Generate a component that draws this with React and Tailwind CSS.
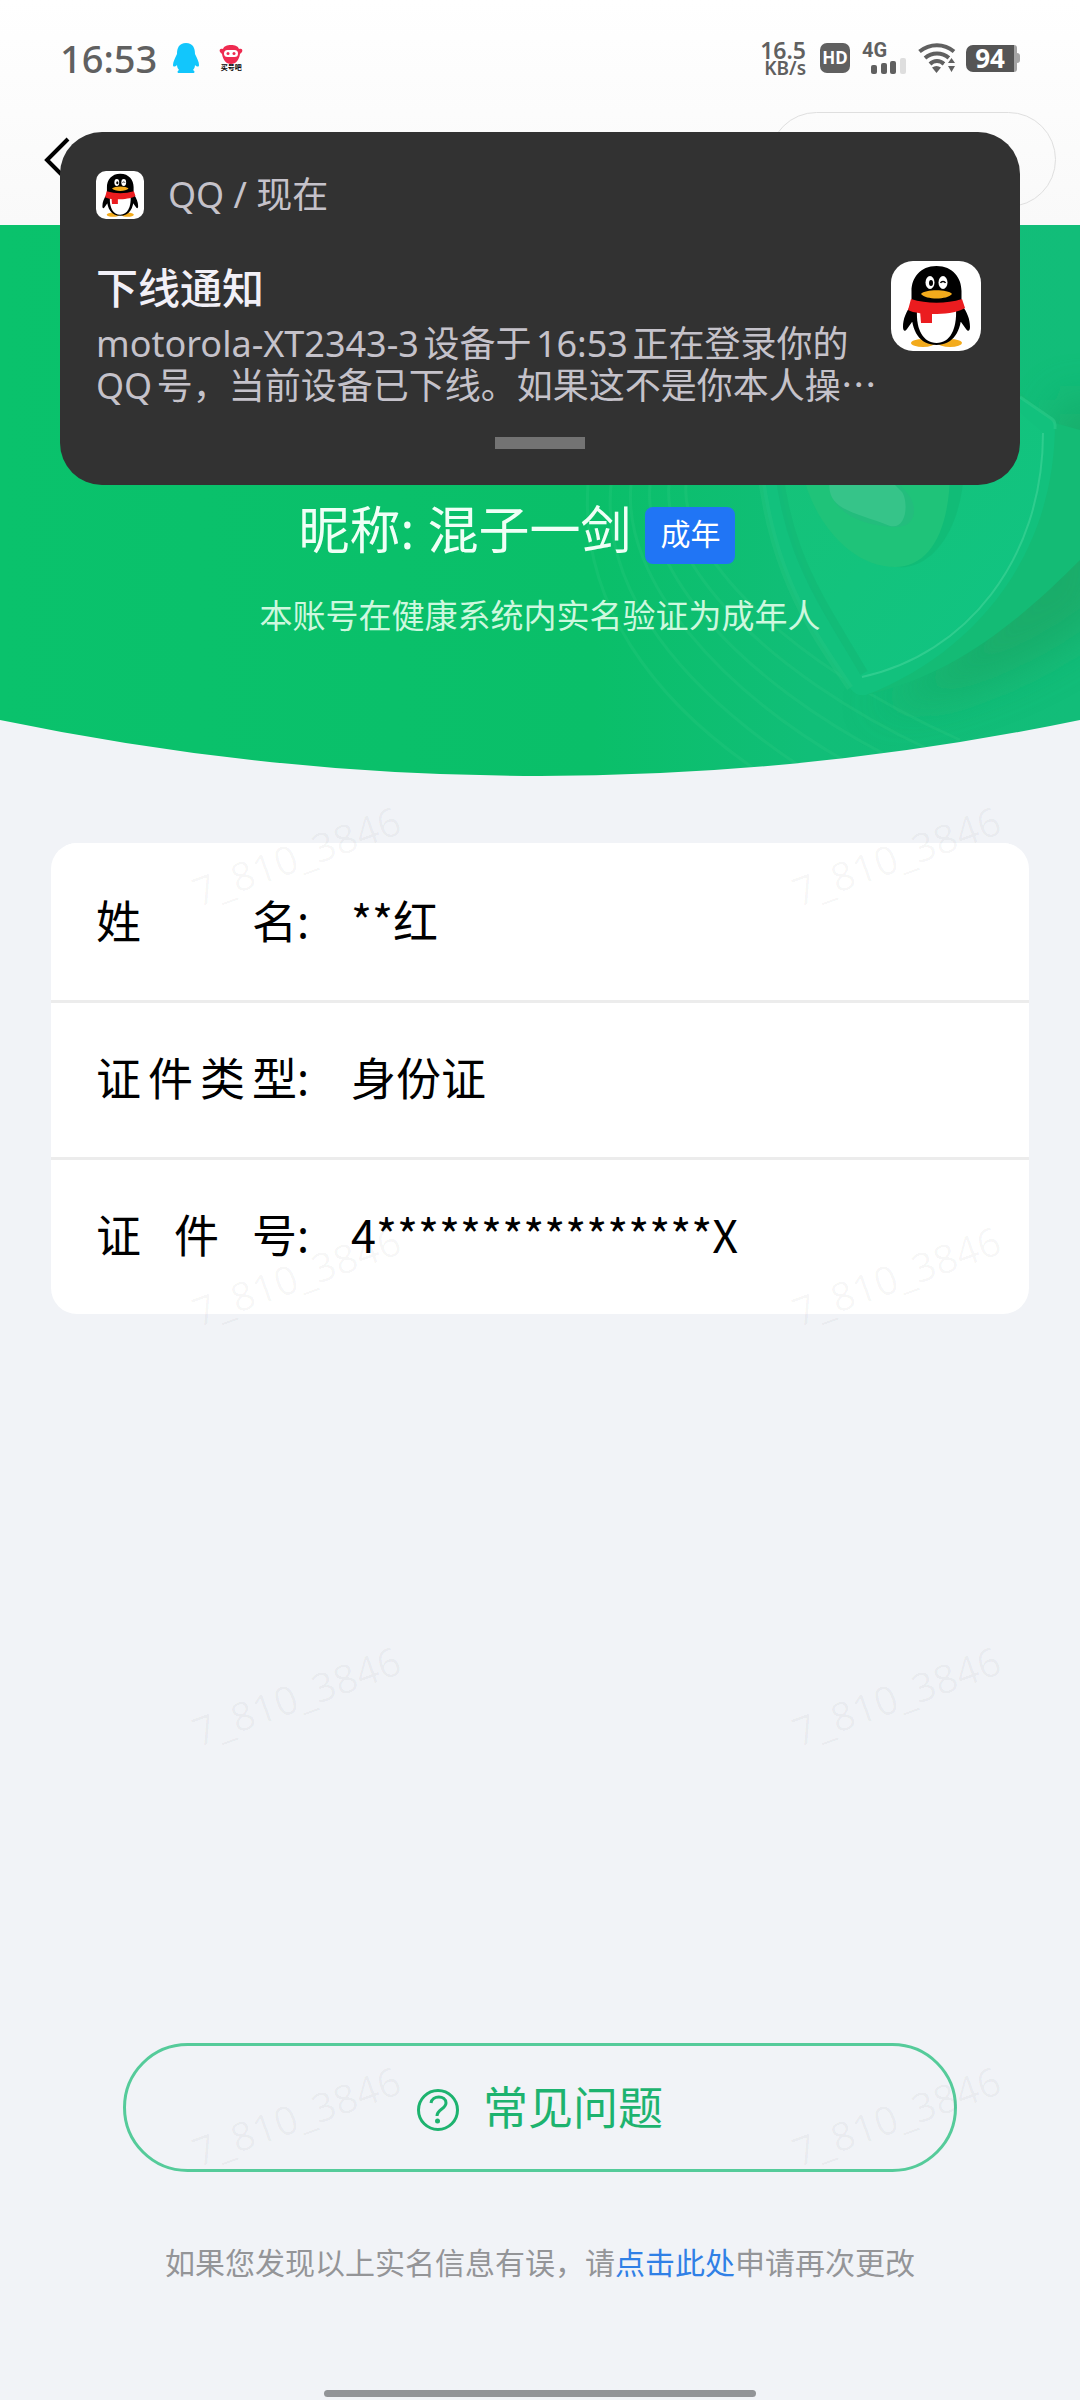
import { useId } from 'react';

const rows = [
  { label: '姓名', value: '**红' },
  { label: '证件类型', value: '身份证' },
  { label: '证件号', value: '4****************X' },
];

const rings = [
  'M588 485C580 600 650 700 765 776',
  'M611 485C601 590 680 690 815 776',
  'M631 485C622 580 720 690 850 764',
  'M650 485C642 570 740 680 890 757',
  'M669 485C662 560 760 670 930 750',
  'M686 485C680 550 780 660 960 740',
];

function Penguin({ className }) {
  return (
    <svg viewBox="0 0 90 90" className={className} aria-hidden="true">
      <rect width="90" height="90" fill="#fff" />
      <ellipse cx="32" cy="82" rx="12" ry="4" fill="#f3ab1c" />
      <ellipse cx="59" cy="82" rx="12" ry="4" fill="#f3ab1c" />
      <path d="M20 44C15 51 12 58 12 66c0 4 2 5 4 2l5-7h49l5 7c2 3 4 2 4-2 0-8-3-15-8-22Z" fill="#000" />
      <path d="M45.500 5C29 5 20.500 17 20.500 30v20C20 70 29 84 45.500 84S71 70 70.500 50V30C70.500 17 62 5 45.500 5Z" fill="#000" />
      <path d="M26 50c-1 18 6 32 19.500 32S66 68 65 48Z" fill="#fff" />
      <path d="M20 38c16 5 35 5 51 0l3 9c-4 3-17 6-28 6-12 0-24-1-29-4Z" fill="#eb1c1f" />
      <path d="M29 49h12v13H30Z" fill="#eb1c1f" />
      <ellipse cx="39" cy="21.500" rx="4.500" ry="6.500" fill="#fff" />
      <ellipse cx="52" cy="21.500" rx="4.500" ry="6.500" fill="#fff" />
      <ellipse cx="40" cy="22" rx="2" ry="3" fill="#000" />
      <path d="M49.500 22c1-2 4-2 5 0" fill="none" stroke="#000" strokeWidth="1.500" />
      <path d="M30 33c4-5 27-5 31 0-5 6-26 6-31 0Z" fill="#f3ab1c" />
    </svg>
  );
}

function StatusBar() {
  return (
    <div className="flex h-[112px] items-center justify-between pl-15 pr-15 pt-1 text-[#606060]">
      <div className="flex items-center">
        <span className="text-[38px] leading-10 font-medium">16:53</span>
        <svg viewBox="0 0 26 30" className="ml-4 h-[30px] w-[26px]" aria-hidden="true">
          <path d="M13 0C6 0 4 5 4 11c-2 4-4 8-4 11 0 2 2 2 4 0 0 2 1 4 2 5-2 1-2 3 0 3h14c2 0 2-2 0-3 1-1 2-3 2-5 2 2 4 2 4 0 0-3-2-7-4-11 0-6-2-11-9-11Z" fill="#12c6fc" />
        </svg>
        <div className="ml-5 flex flex-col items-center">
          <svg viewBox="0 0 24 19" className="h-[19px] w-6" aria-hidden="true">
            <path d="M12 0C8 0 5 1 4 4 1 3 0 5 1 7l2 2c1 6 4 10 9 10s8-4 9-10l2-2c1-2 0-4-3-3-1-3-4-4-8-4Z" fill="#ee2b50" />
            <rect x="5" y="5" width="14" height="7" rx="3.500" fill="#fff" />
            <circle cx="9" cy="8.500" r="1.500" fill="#ee2b50" />
            <circle cx="15" cy="8.500" r="1.500" fill="#ee2b50" />
          </svg>
          <span className="text-[7px] leading-2 font-bold text-black">买号吧</span>
        </div>
      </div>
      <div className="flex items-center">
        <div className="flex flex-col items-end font-semibold">
          <span className="text-[23px] leading-5">16.5</span>
          <span className="text-[19px] leading-4">KB/s</span>
        </div>
        <span className="ml-[14px] flex h-[30px] w-[30px] items-center justify-center rounded-[7px] bg-[#606060] text-[17px] leading-5 font-bold text-white">
          HD
        </span>
        <div className="ml-3 flex w-11 flex-col">
          <span className="font-['Roboto',sans-serif] text-[20px] leading-4 font-bold">4G</span>
          <svg viewBox="0 0 44 16" className="h-4 w-11" aria-hidden="true">
            <rect x="9" y="7" width="6" height="9" rx="2" fill="#606060" />
            <rect x="19" y="5" width="6" height="11" rx="2" fill="#606060" />
            <rect x="28" y="3" width="6" height="13" rx="2" fill="#606060" />
            <rect x="38" y="0" width="6" height="16" rx="2" fill="#dedede" />
          </svg>
        </div>
        <svg viewBox="0 0 38 30" className="ml-3 h-[30px] w-[38px]" aria-hidden="true">
          <g fill="none" stroke="#606060" strokeWidth="4">
            <path d="M1.500 8.500C12 0 26 0 36 8.500" />
            <path d="M7 15C14 9 24 9 31 15" />
            <path d="M12 21c4-4 10-4 14 0" />
          </g>
          <path d="M14 24.500c3-2 6-2 9 0L18.500 30Z" fill="#606060" />
          <path d="M33.500 12 39 21l-5 10-8-6v-4Z" fill="#fcfcfc" />
          <path d="m33.500 15 3.500 5h-7ZM33.500 29l3.500-6h-7Z" fill="#606060" />
        </svg>
        <div className="ml-[10px] flex items-center">
          <span className="flex h-[27px] w-12 items-center justify-center rounded-l-[7px] bg-[#555] text-[26px] leading-6 font-bold text-white">94</span>
          <span className="h-[27px] w-[3px] rounded-r-[6px] bg-[#a5a5a5]" />
          <span className="h-[10px] w-[3px] rounded-r-[3px] bg-[#a5a5a5]" />
        </div>
      </div>
    </div>
  );
}

function HeroArt() {
  const id = useId();
  return (
    <svg viewBox="0 225 1080 551" preserveAspectRatio="none" className="absolute inset-0 h-full w-full" aria-hidden="true">
      <defs>
        <clipPath id={`${id}clip`}>
          <path d="M0 225H1080V720Q810 776 540 776T0 720Z" />
        </clipPath>
        <linearGradient id={`${id}base`} x1="0" y1="0" x2="1" y2="0">
          <stop offset="0" stopColor="#0ac26c" />
          <stop offset="0.55" stopColor="#0abf69" />
          <stop offset="0.75" stopColor="#11be78" />
          <stop offset="1" stopColor="#12bd79" />
        </linearGradient>
        <linearGradient id={`${id}face`} x1="0" y1="0" x2="1" y2="1">
          <stop offset="0" stopColor="#16c277" />
          <stop offset="1" stopColor="#10c483" />
        </linearGradient>
        <filter id={`${id}soft`} x="-30%" y="-30%" width="160%" height="160%">
          <feGaussianBlur stdDeviation="22" />
        </filter>
      </defs>
      <g clipPath={`url(#${id}clip)`}>
        <rect y="225" width="1080" height="551" fill={`url(#${id}base)`} />
        <path d="M870 710C960 700 1050 660 1110 610V400H1060C1050 560 950 670 870 710Z" fill="#1aa866" opacity="0.8" filter={`url(#${id}soft)`} />
        <g fill="none" stroke="#3fd08a" strokeWidth="3" opacity="0.18">
          {rings.map((d) => (
            <path key={d} d={d} />
          ))}
        </g>
        {/* shield edge, face and highlight */}
        <path d="M757 400C755 560 815 635 850 688Q856 697 866 695C960 675 1030 610 1080 560V430L1055 423L960 340Z" fill="#14bb75" />
        <path d="M757 400C755 560 815 635 850 688Q856 697 866 695C970 655 1055 560 1055 423L1020 397L960 340Z" fill="#12c17d" />
        <path d="M757 400C755 560 815 635 850 688" fill="none" stroke="#2bc983" strokeWidth="7" opacity="0.35" />
        <path d="M774 400C775 545 820 600 862 677C960 655 1043 560 1043 433L960 360Z" fill={`url(#${id}face)`} />
        <path d="M776 420C776 545 822 600 864 673" fill="none" stroke="#13b874" strokeWidth="8" opacity="0.6" />
        <path d="M862 677C965 655 1043 560 1043 433" fill="none" stroke="#3bd295" strokeWidth="2" opacity="0.7" />
        <path d="M1020 397 1052 419q4 3 3 10" fill="none" stroke="#2bcb8b" strokeWidth="3" opacity="0.6" />
        <path d="M820 470C825 535 870 570 906 567C940 562 962 520 964 470Z" fill="#11b975" opacity="0.7" />
        <path d="M802 470C812 520 850 567 895 567C930 567 950 530 950 470Z" fill="#1fc379" />
        <path d="M832 470C820 510 860 525 892 527Q915 528 914 508C912 495 904 490 894 480Z" fill="#23bd7d" />
        <path d="M832 470C820 510 850 510 890 526C908 530 908 500 902 492L880 470Z" fill="#36c489" />
      </g>
    </svg>
  );
}

function Notification() {
  return (
    <div role="alert" className="absolute inset-x-15 top-[132px] z-20 flex flex-col rounded-[42px] bg-[#323232] px-9 pt-[39px] pb-9">
      <div className="flex h-12 items-center">
        <Penguin className="h-12 w-12 rounded-[10px]" />
        <span className="ml-6 text-[36px] leading-10 text-[#c5c2ca]">QQ / 现在</span>
      </div>
      <div className="mt-[42px] flex items-start justify-between pr-[3px]">
        <div className="flex-1 pr-3">
          <h2 className="text-[42px] leading-[54px] font-medium text-[#f2f0f7]">下线通知</h2>
          <p className="mt-2 text-[36px] leading-[42px] text-[#c5c2ca] [text-autospace:normal]">
            motorola-XT2343-3设备于16:53正在登录你的QQ号，当前设备已下线。如果这不是你本人操⋯
          </p>
        </div>
        <Penguin className="h-[90px] w-[90px] rounded-[22px]" />
      </div>
      <div className="mt-[30px] h-3 w-[90px] self-center bg-[#737373]" />
    </div>
  );
}

function Watermark() {
  return (
    <div aria-hidden="true" className="pointer-events-none absolute inset-x-0 top-[646px] bottom-0 z-10 overflow-hidden">
      {[0, 1, 2, 3].map((row) => (
        <div key={row} className="flex h-[420px]">
          {[0, 1].map((col) => (
            <div key={col} className="flex w-[600px] shrink-0 items-center justify-center pr-2">
              <span className="-rotate-20 text-[40px] leading-10 text-[#00000008]">7_810_3846</span>
            </div>
          ))}
        </div>
      ))}
    </div>
  );
}

export default function App() {
  return (
    <div className="relative flex min-h-screen flex-col overflow-hidden bg-[#f1f3f7] font-['Noto_Sans','Noto_Sans_CJK_SC',sans-serif]" lang="zh-CN">
      <header className="h-[225px] bg-linear-to-b from-white to-[#f9f9f9]">
        <StatusBar />
        <nav className="flex items-center justify-between pr-6 pl-[43px]">
          <button type="button" aria-label="返回">
            <svg viewBox="0 0 28 48" className="h-12 w-7" fill="none" stroke="#000" strokeWidth="4" aria-hidden="true">
              <path d="M25 3 4 24l21 21" />
            </svg>
          </button>
          <div className="h-[95px] w-[287px] rounded-full border border-[#dfdfdf]" />
        </nav>
      </header>

      <section className="relative pt-[277px] pb-[140px]">
        <HeroArt />
        <div className="relative flex items-start justify-center pr-[46px]">
          <h1 className="text-[51px] leading-[54px] text-[#effff6]">昵称: 混子一剑</h1>
          <span className="mt-[5px] ml-[14px] flex h-[57px] w-[90px] items-center justify-center rounded-[8px] bg-[#2075f5] pb-1 text-[30px] leading-10 text-white">
            成年
          </span>
        </div>
        <p className="relative mt-8 text-center text-[33px] leading-10 text-[#cdf8de]">本账号在健康系统内实名验证为成年人</p>
      </section>

      <dl className="mx-[51px] mt-[67px] overflow-hidden rounded-[26px] bg-white">
        {rows.map(({ label, value }, i) => (
          <div key={label} className={`flex h-[157px] items-baseline border-t-3 px-[45px] pt-[46px] text-[45px] leading-[56px] text-black ${i > 0 ? 'border-[#ececec]' : 'border-white'}`}>
            <dt className="flex">
              <span className="flex w-[201px] justify-between">
                {[...label].map((char) => (
                  <span key={char}>{char}</span>
                ))}
              </span>
              <span>:</span>
            </dt>
            <dd className="ml-[42px] font-['Noto_Sans_CJK_SC',sans-serif]">{value}</dd>
          </div>
        ))}
      </dl>

      <footer className="mt-auto flex flex-col items-center pb-[3px]">
        <div className="w-full px-[123px]">
          <button type="button" className="flex h-[129px] w-full items-center justify-center gap-6 rounded-full border-3 border-[#55cb9a] text-[45px] leading-[56px] text-[#1db36f]">
            <svg viewBox="0 0 42 42" className="mt-1 h-[42px] w-[42px]" fill="none" stroke="#1db36f" strokeWidth="3" aria-hidden="true">
              <circle cx="21" cy="21" r="19.500" />
              <path d="M14 14c1-8 15-8 15 0 0 6-9 6-9 13" />
              <circle cx="20.500" cy="32" r="2.500" fill="#1db36f" stroke="none" />
            </svg>
            <span>常见问题</span>
          </button>
        </div>
        <p className="mt-[71px] text-[30px] leading-10 text-[#949598]">
          如果您发现以上实名信息有误，请
          <a href="#appeal" className="text-[#3080e6]">点击此处</a>
          申请再次更改
        </p>
        <div className="mt-[107px] h-[7px] w-[432px] rounded-full bg-[#929497]" />
      </footer>

      <Watermark />
      <Notification />
    </div>
  );
}
